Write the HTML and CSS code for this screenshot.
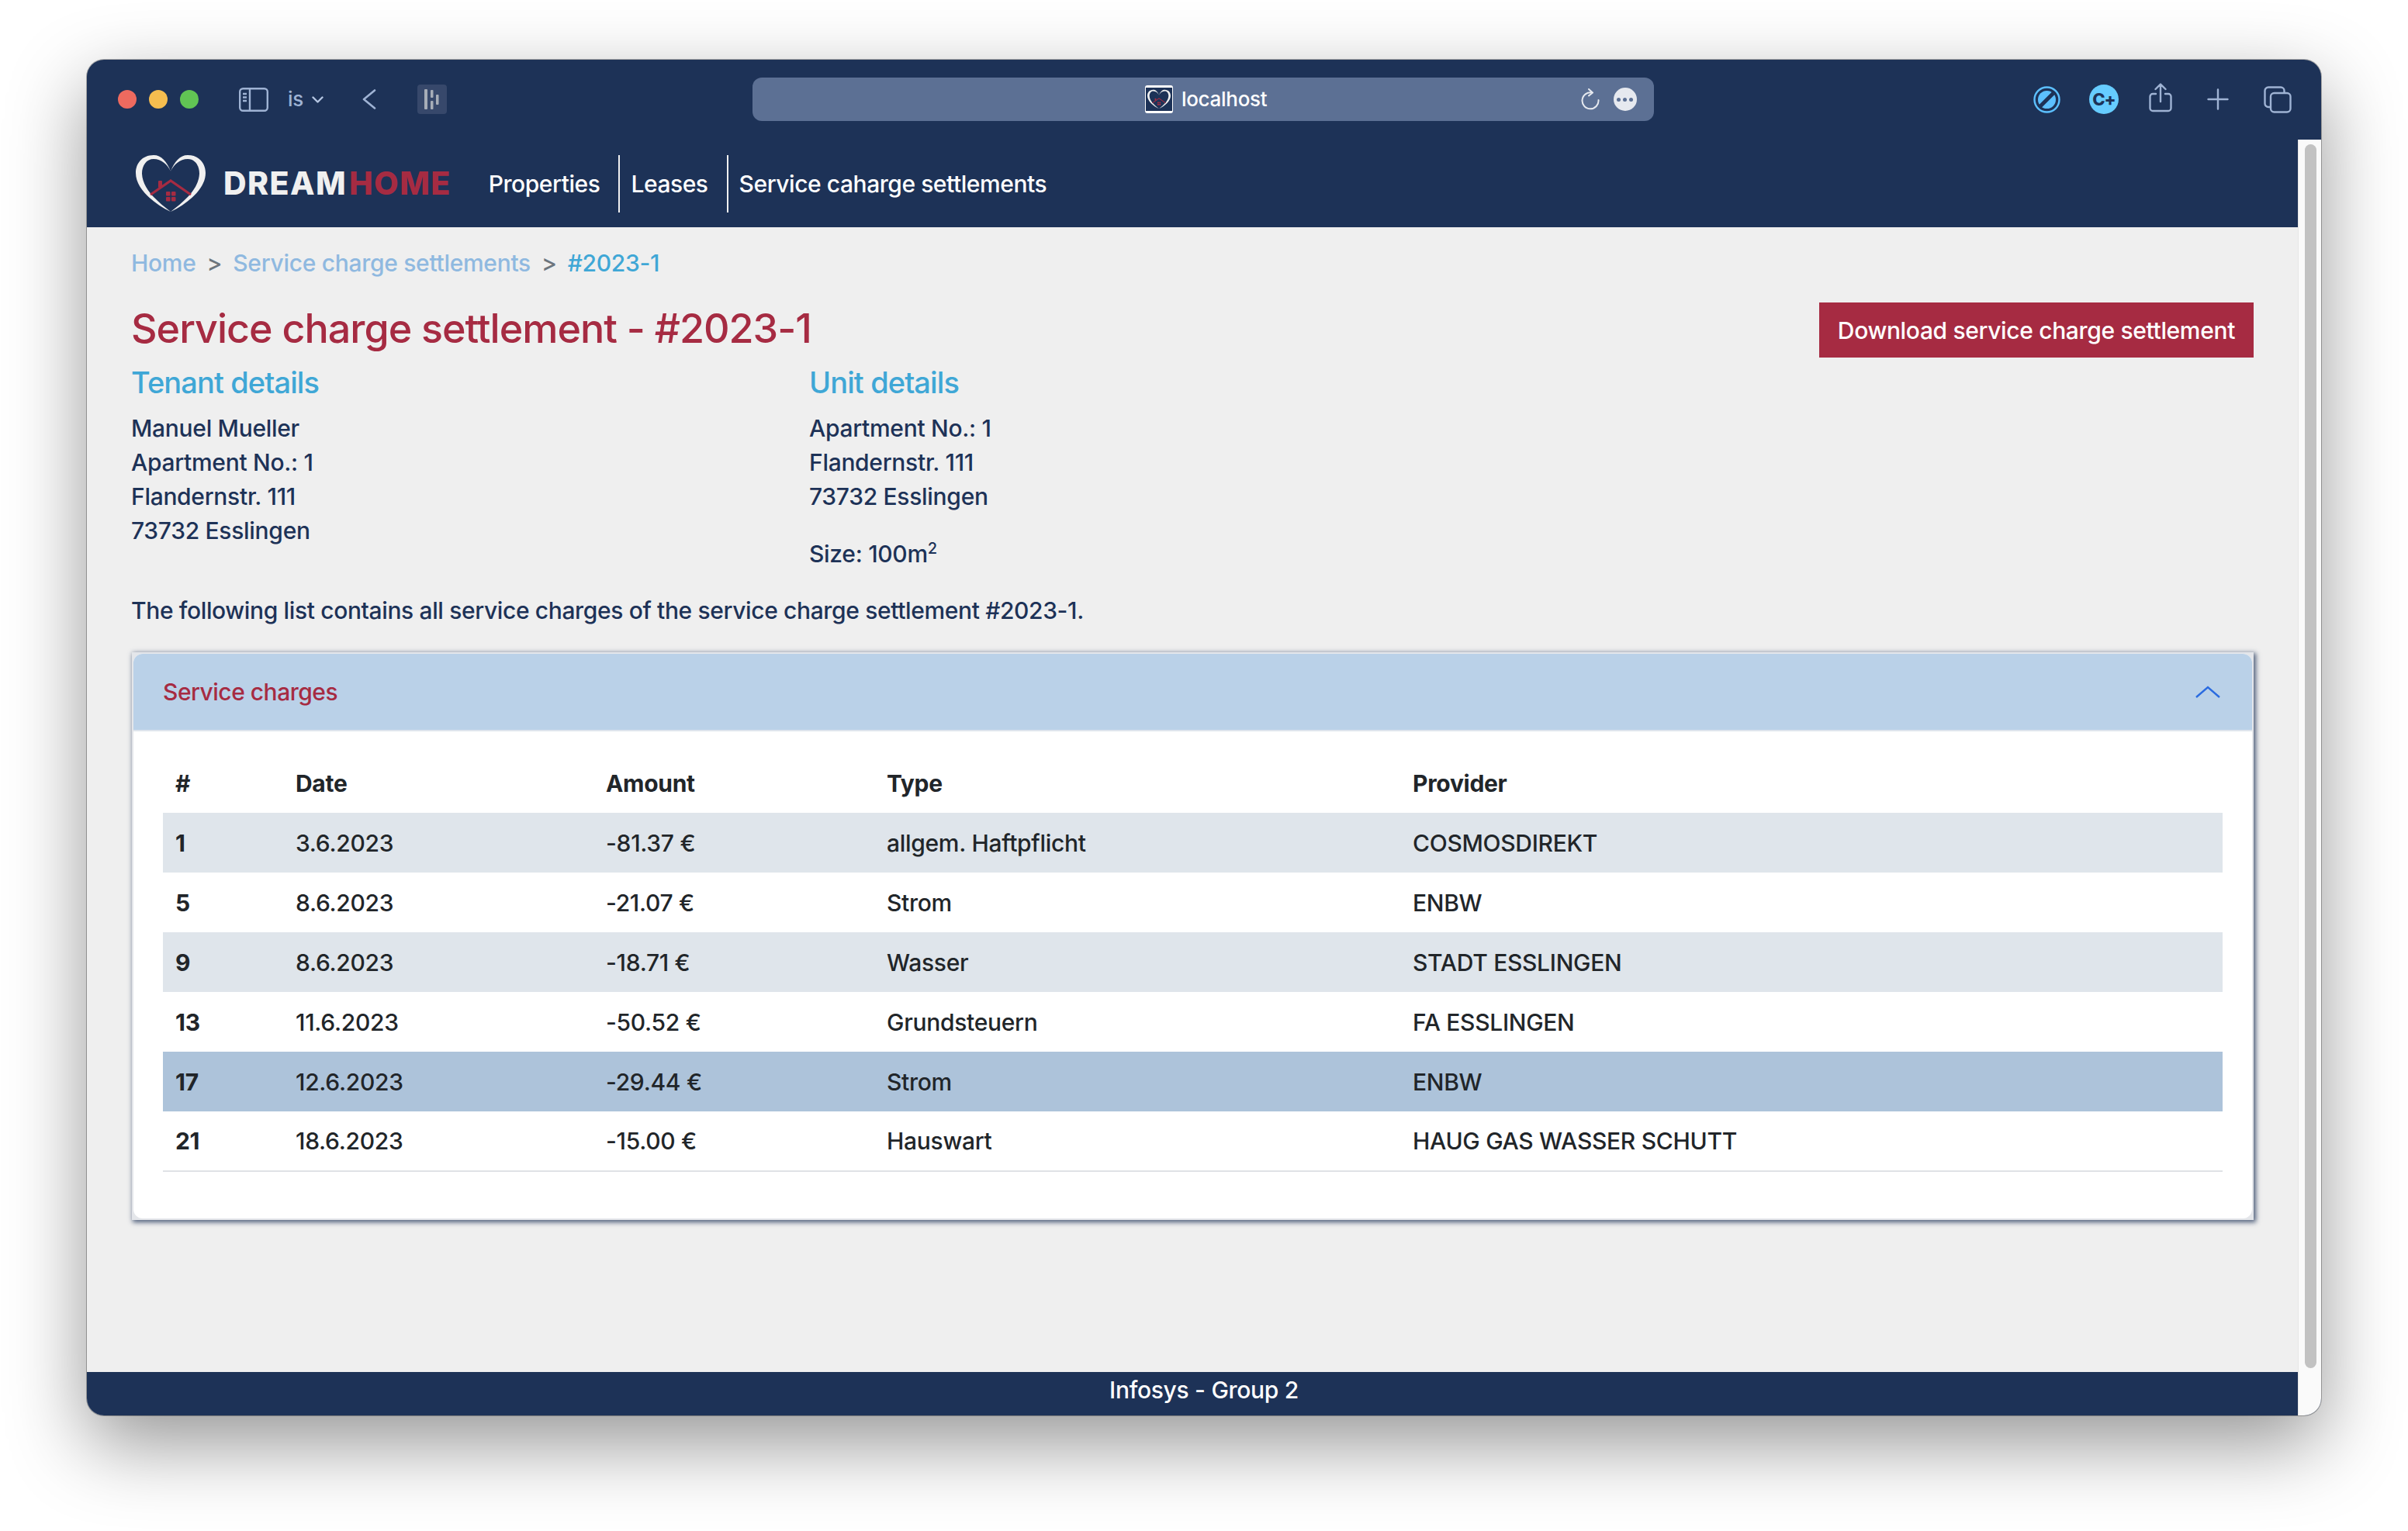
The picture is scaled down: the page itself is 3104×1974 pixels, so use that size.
FILE: index.html
```html
<!DOCTYPE html>
<html lang="en">

<head>
    <meta charset="UTF-8">
    <meta name="viewport" content="width=device-width, initial-scale=1.0">
    <title>Service charge settlement</title>
    <link rel="stylesheet" href="styles.css">
</head>

<body>
    <svg class="defs" width="0" height="0">
        <symbol id="logo" viewBox="0 0 90 73">
            <path fill="#f0f0f0" d="M45 21C40 8 33 0 23 0 8 0 0 11 0 23c0 21 24 40 45 50C28 60 9 44 8 24 8 13 14 5 23 5c10 0 18 7 22 16Z" />
            <path fill="#f0f0f0" d="M45 21C50 8 57 0 67 0c15 0 23 11 23 23 0 21-24 40-45 50C62 60 81 44 82 24 82 13 76 5 67 5 57 5 49 12 45 21Z" />
            <path fill="none" stroke="#a62b42" stroke-width="3.2" d="M19 51 45 33 71 51" />
            <rect x="29" y="33" width="5" height="9" rx="1" fill="#a62b42" />
            <g fill="#a62b42">
                <rect x="39" y="47" width="5.5" height="5.5" rx="1" />
                <rect x="46" y="47" width="5.5" height="5.5" rx="1" />
                <rect x="39" y="54" width="5.5" height="5.5" rx="1" />
                <rect x="46" y="54" width="5.5" height="5.5" rx="1" />
            </g>
        </symbol>
    </svg>

    <div class="window">
        <header class="toolbar">
            <div class="lights">
                <span class="light red"></span>
                <span class="light yellow"></span>
                <span class="light green"></span>
            </div>
            <svg class="tb-sidebar" width="38" height="31" viewBox="0 0 38 31" fill="none" stroke="#9fb3d4" stroke-width="2.4">
                <rect x="1.2" y="1.2" width="35.6" height="28.6" rx="4" />
                <path d="M14 1.500v28M5 8h5M5 12.500h5M5 17h5" />
            </svg>
            <span class="tb-group">is</span>
            <svg class="tb-caret" width="15" height="9" viewBox="0 0 15 9" fill="none" stroke="#b5c6e2" stroke-width="2.4" stroke-linecap="round" stroke-linejoin="round">
                <path d="M1.500 1.500 7.500 7.500 13.500 1.500" />
            </svg>
            <svg class="tb-back" width="18" height="26" viewBox="0 0 18 26" fill="none" stroke="#9fb3d4" stroke-width="2.600" stroke-linecap="round" stroke-linejoin="round">
                <path d="M16 1.500 2 13 16 24.500" />
            </svg>
            <div class="tb-ext">
                <svg width="20" height="26" viewBox="0 0 20 26" fill="#a7adb8">
                    <rect x="0" y="0" width="4" height="26" rx="1" />
                    <rect x="8" y="1" width="3.500" height="10" rx="1" />
                    <rect x="8" y="15" width="3.500" height="11" rx="1" />
                    <rect x="15" y="7" width="3.500" height="13" rx="1" />
                </svg>
            </div>
            <div class="urlbar">
                <div class="url-center">
                    <span class="favicon"><svg width="30" height="26"><use href="#logo" /></svg></span>
                    <span class="url-text">localhost</span>
                </div>
                <svg class="url-reload" width="26" height="28" viewBox="0 0 26 28" fill="none" stroke="#e6e9ef" stroke-width="2" stroke-linecap="round" stroke-linejoin="round">
                    <path d="M15 5.500A10.500 10.500 0 1 0 23.500 15M11 1l5 4.500-5 4" />
                </svg>
                <span class="url-more"><i></i><i></i><i></i></span>
            </div>
            <div class="tb-right">
                <svg width="35" height="35" viewBox="0 0 35 35">
                    <circle cx="17.500" cy="17.500" r="16" fill="none" stroke="#5cc0ff" stroke-width="2.400" />
                    <circle cx="17.500" cy="17.500" r="11.500" fill="#5cc0ff" />
                    <path d="M9 26 26 9" stroke="#1d3257" stroke-width="5" />
                </svg>
                <span class="tb-cplus">C+</span>
                <svg class="tb-share" width="30" height="38" viewBox="0 0 30 38" fill="none" stroke="#9fb3d4" stroke-width="2.400" stroke-linecap="round" stroke-linejoin="round">
                    <path d="M9 14H5a3.500 3.500 0 0 0-3.500 3.500v15A3.500 3.500 0 0 0 5 36h20a3.500 3.500 0 0 0 3.500-3.500v-15A3.500 3.500 0 0 0 25 14h-4M15 24V2M8.500 8 15 1.500 21.500 8" />
                </svg>
                <svg class="tb-plus" width="28" height="28" viewBox="0 0 28 28" fill="none" stroke="#9fb3d4" stroke-width="2.400" stroke-linecap="round">
                    <path d="M14 1.500v25M1.500 14h25" />
                </svg>
                <svg class="tb-tabs" width="36" height="35" viewBox="0 0 36 35" fill="none" stroke="#9fb3d4" stroke-width="2.400" stroke-linejoin="round">
                    <path d="M9 27H6a4.500 4.500 0 0 1-4.500-4.500V6A4.500 4.500 0 0 1 6 1.500h16A4.500 4.500 0 0 1 26.500 6v3" />
                    <rect x="9" y="9" width="25.500" height="24.500" rx="4.500" />
                </svg>
            </div>
        </header>

        <div class="viewport">
            <div class="page">
                <nav class="navbar">
                    <a class="brand" href="#">
                        <svg width="90" height="73"><use href="#logo" /></svg>
                        <span class="brand-name">DREAM<span class="brand-accent">HOME</span></span>
                    </a>
                    <a class="nav-link" href="#">Properties</a>
                    <a class="nav-link" href="#">Leases</a>
                    <a class="nav-link" href="#">Service caharge settlements</a>
                </nav>

                <main class="content">
                    <ol class="breadcrumb">
                        <li><a href="#">Home</a></li>
                        <li class="sep">&gt;</li>
                        <li><a href="#">Service charge settlements</a></li>
                        <li class="sep">&gt;</li>
                        <li class="current">#2023-1</li>
                    </ol>

                    <div class="title-row">
                        <h1>Service charge settlement - #2023-1</h1>
                        <button class="btn-download">Download service charge settlement</button>
                    </div>

                    <div class="details">
                        <section>
                            <h2>Tenant details</h2>
                            <p>Manuel Mueller<br>Apartment No.: 1<br>Flandernstr. 111<br>73732 Esslingen</p>
                        </section>
                        <section>
                            <h2>Unit details</h2>
                            <p>Apartment No.: 1<br>Flandernstr. 111<br>73732 Esslingen</p>
                            <p class="size">Size: 100m<sup>2</sup></p>
                        </section>
                    </div>

                    <p class="intro">The following list contains all service charges of the service charge settlement #2023-1.</p>

                    <div class="card">
                        <div class="card-inner">
                            <div class="card-head">
                                <span>Service charges</span>
                                <svg width="32" height="16" viewBox="0 0 32 16" fill="none" stroke="#2a6be0" stroke-width="2.400">
                                    <path d="M1 15 16 2 31 15" />
                                </svg>
                            </div>
                            <div class="card-body">
                                <table>
                                    <thead>
                                        <tr><th>#</th><th>Date</th><th>Amount</th><th>Type</th><th>Provider</th></tr>
                                    </thead>
                                    <tbody>
                                        <tr class="odd"><th>1</th><td>3.6.2023</td><td>-81.37 €</td><td>allgem. Haftpflicht</td><td>COSMOSDIREKT</td></tr>
                                        <tr><th>5</th><td>8.6.2023</td><td>-21.07 €</td><td>Strom</td><td>ENBW</td></tr>
                                        <tr class="odd"><th>9</th><td>8.6.2023</td><td>-18.71 €</td><td>Wasser</td><td>STADT ESSLINGEN</td></tr>
                                        <tr><th>13</th><td>11.6.2023</td><td>-50.52 €</td><td>Grundsteuern</td><td>FA ESSLINGEN</td></tr>
                                        <tr class="active"><th>17</th><td>12.6.2023</td><td>-29.44 €</td><td>Strom</td><td>ENBW</td></tr>
                                        <tr class="last"><th>21</th><td>18.6.2023</td><td>-15.00 €</td><td>Hauswart</td><td>HAUG GAS WASSER SCHUTT</td></tr>
                                    </tbody>
                                </table>
                            </div>
                        </div>
                    </div>
                </main>

                <footer class="footer">Infosys - Group 2</footer>
            </div>
            <div class="scrollbar"><div class="thumb"></div></div>
        </div>
    </div>
</body>

</html>
```

FILE: styles.css
```css
* {
    box-sizing: border-box;
}

html,
body {
    margin: 0;
    height: 100%;
}

body {
    padding: 77px 112px 149px;
    background: #fff;
    overflow: hidden;
    font-family: Inter, "Liberation Sans", sans-serif;
    font-size: 30px;
    font-weight: 450;
    letter-spacing: -0.3px;
    line-height: 44px;
    color: #1d3257;
}

a {
    color: inherit;
    text-decoration: none;
}

.defs {
    position: absolute;
}

.window {
    display: flex;
    flex-direction: column;
    height: 100%;
    border-radius: 22px;
    overflow: hidden;
    background: #1d3257;
    box-shadow: 0 0 0 1px rgba(0, 0, 0, 0.28), 0 36px 100px rgba(0, 0, 0, 0.42);
}

/* browser chrome */
.toolbar {
    display: flex;
    align-items: center;
    flex: none;
    height: 103px;
    padding-bottom: 1px;
}

.lights {
    display: flex;
    gap: 16px;
    margin-left: 40px;
}

.light {
    width: 24px;
    height: 24px;
    border-radius: 50%;
}

.red {
    background: #ee6a5f;
}

.yellow {
    background: #f5bd4f;
}

.green {
    background: #61c454;
}

.tb-sidebar {
    margin-left: 52px;
}

.tb-group {
    margin-left: 25px;
    color: #9fb3d4;
    font-size: 26px;
    font-weight: 500;
}

.tb-caret {
    margin-left: 11px;
}

.tb-back {
    margin-left: 50px;
}

.tb-ext {
    display: flex;
    align-items: center;
    justify-content: center;
    width: 38px;
    height: 38px;
    margin-left: 53px;
    border-radius: 4px;
    background: #37486b;
}

.urlbar {
    display: flex;
    align-items: center;
    width: 1162px;
    height: 56px;
    margin-left: 394px;
    padding: 0 22px 0 506px;
    border-radius: 12px;
    background: #5c7094;
    color: #fff;
}

.url-center {
    display: flex;
    align-items: center;
    gap: 11px;
    flex: 1;
}

.favicon {
    display: flex;
    align-items: center;
    justify-content: center;
    width: 36px;
    height: 36px;
    border: 2px solid #fff;
    border-width: 3px 1px;
    border-radius: 3px;
    background: #1d3257;
}

.url-text {
    font-size: 26px;
}

.url-reload {
    margin-right: 17px;
}

.url-more {
    display: flex;
    align-items: center;
    justify-content: center;
    gap: 3px;
    width: 30px;
    height: 30px;
    border-radius: 50%;
    background: #e6e9ef;
}

.url-more i {
    width: 5px;
    height: 5px;
    border-radius: 50%;
    background: #5c7094;
}

.tb-right {
    display: flex;
    align-items: center;
    gap: 37px;
    margin-left: 489px;
}

.tb-cplus {
    display: flex;
    align-items: center;
    justify-content: center;
    width: 38px;
    height: 38px;
    border-radius: 50%;
    background: #66ccff;
    color: #1d3257;
    font-size: 22px;
    font-weight: 800;
    letter-spacing: -1px;
}

.tb-share {
    margin-left: 2px;
    margin-top: -4px;
}

.tb-plus {
    margin-left: 8px;
}

.tb-tabs {
    margin-left: 8px;
}

.viewport {
    display: flex;
    flex: 1;
    min-height: 0;
}

.page {
    display: flex;
    flex-direction: column;
    flex: 1;
    min-width: 0;
    background: #efefef;
}

.scrollbar {
    flex: none;
    width: 30px;
    padding: 6px 6px 61px 8px;
    border-left: 1px solid #e6e6e6;
    background: #fafafa;
}

.thumb {
    height: 100%;
    border-radius: 8px;
    background: #c2c2c2;
}

/* navbar */
.navbar {
    display: flex;
    align-items: center;
    flex: none;
    height: 113px;
    padding: 0 0 0 63px;
    background: #1d3257;
}

.brand {
    display: flex;
    align-items: center;
    gap: 23px;
    margin-right: 34px;
}

.brand-name {
    margin-bottom: 2px;
    color: #f0f0f0;
    font-size: 41px;
    font-weight: 800;
    letter-spacing: 1.4px;
}

.brand-accent {
    margin-left: 3px;
    color: #a62b42;
}

.nav-link {
    display: flex;
    align-items: center;
    height: 74px;
    padding: 0 24px 0 14px;
    color: #fff;
    letter-spacing: -0.45px;
}

.nav-link + .nav-link {
    border-left: 2px solid #f0f0f0;
}

/* content */
.content {
    flex: 1;
    padding: 24px 57px 0;
}

.breadcrumb {
    display: flex;
    gap: 14px;
    margin: 0;
    padding: 0;
    list-style: none;
    color: #8fb9e0;
}

.sep {
    color: #6c757d;
}

.current {
    color: #3fa7d6;
}

.title-row {
    display: flex;
    align-items: flex-start;
    justify-content: space-between;
    margin-top: 33px;
}

h1 {
    margin: 0;
    color: #a62b42;
    font-size: 52px;
    font-weight: 550;
    letter-spacing: -1px;
    line-height: 60px;
}

.btn-download {
    height: 71px;
    margin-top: -4px;
    padding: 0 24px;
    border: 0;
    background: #a62b42;
    color: #fff;
    font-family: inherit;
    font-size: 30px;
    font-weight: 450;
    letter-spacing: -0.35px;
}

.details {
    display: grid;
    grid-template-columns: 874px 1fr;
    margin-top: 9px;
}

h2 {
    margin: 0 0 14px;
    color: #3fa7d6;
    font-size: 38px;
    font-weight: 550;
    letter-spacing: -0.9px;
    line-height: 46px;
}

.details p {
    margin: 0;
}

.details .size {
    margin-top: 30px;
}

sup {
    font-size: 20px;
    line-height: 0;
}

.intro {
    margin: 29px 0 0;
    letter-spacing: -0.37px;
}

.card {
    margin: 32px 0 0 1px;
    padding: 2px;
    background: #e4e6ea;
    box-shadow: 2px 2px 6px 1px rgba(29, 50, 87, 0.75);
}

.card-inner {
    border-radius: 12px;
    background: #fff;
    overflow: hidden;
}

.card-head {
    display: flex;
    align-items: center;
    justify-content: space-between;
    height: 100px;
    padding: 0 41px 0 38px;
    border-bottom: 2px solid #dfe5ed;
    background: #bad1e8;
    color: #a62b42;
    letter-spacing: -0.5px;
}

.card-body {
    height: 628px;
    padding: 29px 38px 0;
    color: #212529;
}

table {
    width: 100%;
    border-collapse: collapse;
    table-layout: fixed;
}

th,
td {
    height: 77px;
    padding: 0 16px;
    text-align: left;
    font-weight: 450;
}

th {
    font-weight: 700;
}

thead th:nth-child(1) {
    width: 155px;
}

thead th:nth-child(2) {
    width: 400px;
}

thead th:nth-child(3) {
    width: 362px;
}

thead th:nth-child(4) {
    width: 678px;
}

thead th {
    height: 76px;
}

.odd {
    background: #dfe5eb;
}

.active {
    background: #adc3da;
}

.last th,
.last td {
    border-bottom: 2px solid #dfe2e6;
}

.footer {
    flex: none;
    height: 56px;
    padding-left: 30px;
    background: #1d3257;
    color: #fff;
    text-align: center;
    line-height: 46px;
}
```
